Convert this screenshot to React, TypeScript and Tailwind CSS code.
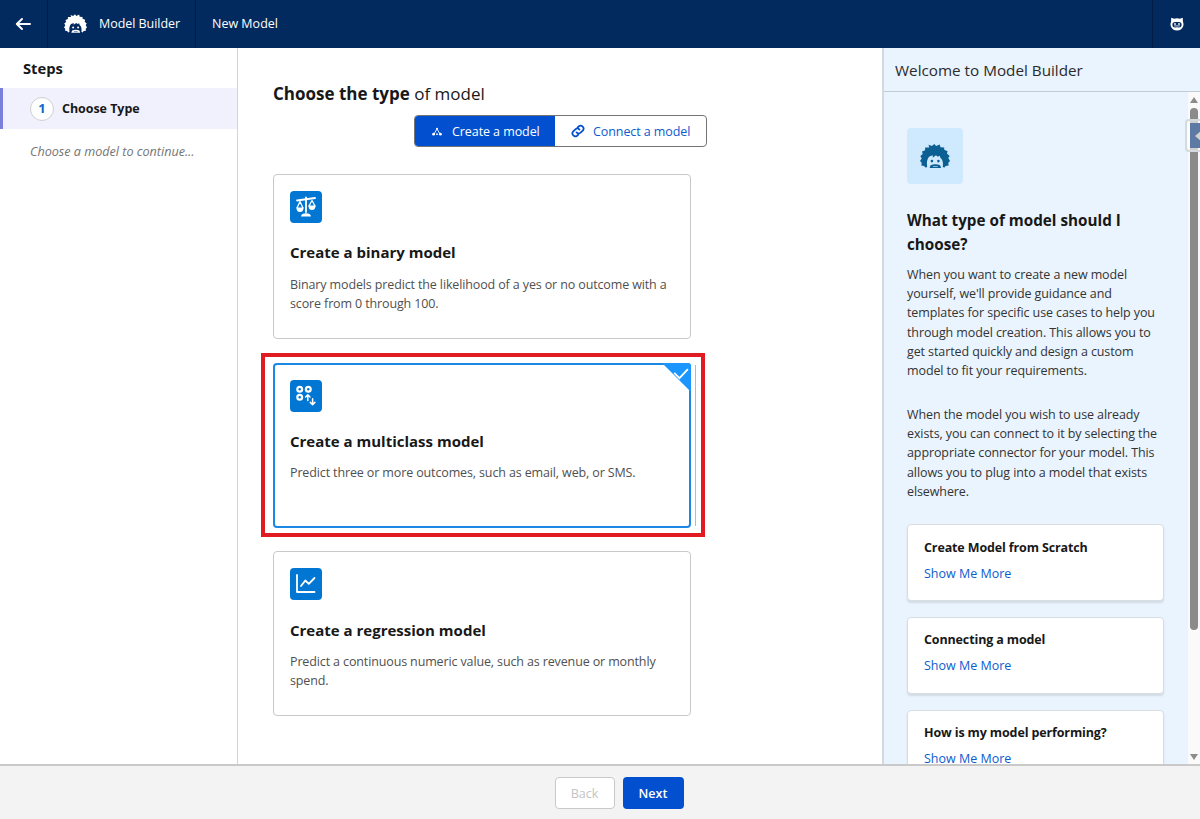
import type { ReactNode } from "react";

type ModelType = {
  title: string;
  lines: string[];
  icon: ReactNode;
  selected?: boolean;
};

function EinsteinIcon({
  className,
  hair,
  face,
}: {
  className: string;
  hair: string;
  face: string;
}) {
  return (
    <svg viewBox="0 0 88 70" className={className}>
      <path
        fill={hair}
        d="M27 10 L25 2 L35 6 L42 0 L47 6 L58 1 L60 9 L71 10 L71 17 L81 21 L79 28 L87 35 L83 41 L88 50 L83 55 L84 63 L75 64 L72 69 L66 67 H22 L16 69 L12 64 L4 63 L5 55 L0 50 L5 42 L1 35 L8 29 L6 22 L15 18 L15 10 Z"
      />
      <path
        fill={face}
        d="M22 71 C19 60 20 48 24 41 C27 36 33 33 38 34 L37 40 L47 33 L52 37 L58 34 L60 41 C67 46 69 58 66 71 Z"
      />
      <circle cx="35" cy="50" r="3.8" fill={hair} />
      <circle cx="54" cy="50" r="3.8" fill={hair} />
      <path fill={hair} d="M28 70 L31 62 Q45 56 59 62 L62 70 Z" />
      <path d="M38 66 H52" stroke={face} strokeWidth="2" />
    </svg>
  );
}

function AstroIcon() {
  return (
    <svg viewBox="0 0 14 14" className="size-3.5">
      <path
        fill="#fff"
        d="M1.2 .8 L4.2 1.8 Q7 .6 9.8 1.8 L12.8 .8 L12.9 4.4 Q14 6.8 13.2 9.2 Q11.6 13.4 7 13.4 Q2.4 13.4 0.8 9.2 Q0 6.8 1.1 4.4 Z"
      />
      <rect x="2.4" y="5" width="9.2" height="5.4" rx="2.7" fill="#022a5e" />
      <path d="M4 8.6 H10 Q9.2 10.6 7 10.6 T4 8.6" fill="#fff" />
      <circle cx="5" cy="7" r=".9" fill="#fff" />
      <circle cx="9" cy="7" r=".9" fill="#fff" />
      <path d="M5 9.4 H9" stroke="#022a5e" strokeWidth=".7" />
    </svg>
  );
}

const scaleIcon = (
  <svg viewBox="0 0 32 32" className="size-8" fill="none" stroke="#fff" strokeLinecap="round">
    <path d="M7 9.5 L25 7" strokeWidth="1.8" />
    <path d="M16 6.5 V21" strokeWidth="1.8" />
    <path d="M10 10.5 L7 17 M10 10.5 L13 17 M22 9.5 L19 15 M22 9.5 L25 15" strokeWidth="1.3" />
    <path d="M6.5 16.5 H13.5 Q13.5 21 10 21 T6.5 16.5 Z M18.5 14.5 H25.5 Q25.5 19 22 19 T18.5 14.5 Z" fill="#fff" stroke="none" />
    <path d="M11 25.5 Q11.5 22.3 16 22.3 T21 25.5 Z" fill="#fff" stroke="none" />
  </svg>
);

const multiclassIcon = (
  <svg viewBox="0 0 32 32" className="size-8" fill="none" stroke="#fff">
    <g strokeWidth="2.2">
      <circle cx="9.7" cy="9.3" r="2.4" />
      <circle cx="18.3" cy="9.3" r="2.4" />
      <circle cx="9.7" cy="17.3" r="2.4" />
    </g>
    <g strokeWidth="1.5" strokeLinecap="round" strokeLinejoin="round">
      <path d="M17.8 20.5 V15 M15.6 17 L17.8 14.8 L20 17" />
      <path d="M22.6 18.8 V24.6 M20.3 22.4 L22.6 24.7 L24.9 22.4" />
    </g>
  </svg>
);

const chartIcon = (
  <svg viewBox="0 0 32 32" className="size-8" fill="none" stroke="#fff" strokeWidth="1.8" strokeLinecap="round" strokeLinejoin="round">
    <path d="M7 7 V24 H24.5" />
    <path d="M11 18 L15.3 12.5 L18.8 15.8 L24.5 10" />
  </svg>
);

const MODEL_TYPES: ModelType[] = [
  {
    title: "Create a binary model",
    lines: [
      "Binary models predict the likelihood of a yes or no outcome with a",
      "score from 0 through 100.",
    ],
    icon: scaleIcon,
  },
  {
    title: "Create a multiclass model",
    lines: ["Predict three or more outcomes, such as email, web, or SMS."],
    icon: multiclassIcon,
    selected: true,
  },
  {
    title: "Create a regression model",
    lines: [
      "Predict a continuous numeric value, such as revenue or monthly",
      "spend.",
    ],
    icon: chartIcon,
  },
];

const HELP_PARAGRAPHS = [
  [
    "When you want to create a new model",
    "yourself, we'll provide guidance and",
    "templates for specific use cases to help you",
    "through model creation. This allows you to",
    "get started quickly and design a custom",
    "model to fit your requirements.",
  ],
  [
    "When the model you wish to use already",
    "exists, you can connect to it by selecting the",
    "appropriate connector for your model. This",
    "allows you to plug into a model that exists",
    "elsewhere.",
  ],
];

const HELP_TOPICS = [
  "Create Model from Scratch",
  "Connecting a model",
  "How is my model performing?",
];

function TopBar() {
  return (
    <header className="flex h-12 shrink-0 items-stretch bg-[#022a5e] text-[12.5px] text-white">
      <button type="button" className="flex w-12 items-center justify-center border-r border-[#021d45]">
        <svg viewBox="0 0 16 14" className="mr-0.5 h-3.5 w-4" fill="none" stroke="#fff" strokeWidth="2" strokeLinecap="round" strokeLinejoin="round">
          <path d="M15 7 H1.8 M7 2 L1.8 7 L7 12" />
        </svg>
      </button>
      <div className="flex w-[148px] items-center border-r border-[#021d45] pl-4">
        <EinsteinIcon className="mb-0.5 h-[19px] w-[23px]" hair="#fff" face="#022a5e" />
        <span className="ml-3 tracking-[-0.05px]">Model Builder</span>
      </div>
      <div className="flex flex-1 items-center pl-4">New Model</div>
      <div className="flex w-12 items-center justify-center border-l border-[#021d45]">
        <AstroIcon />
      </div>
    </header>
  );
}

function StepsPanel() {
  return (
    <aside className="w-[238px] shrink-0 border-r border-[#d4d4d4] bg-white">
      <h2 className="flex h-10 items-center pl-[23px] text-[14.75px] font-bold">Steps</h2>
      <div className="flex h-[41px] items-center border-l-3 border-[#7a7fdc] bg-[#f1f1fe] pl-7">
        <span className="-ml-px flex size-6 items-center justify-center rounded-full border border-[#cfcfcf] bg-white text-[13px] font-bold text-[#0b6bcb]">
          1
        </span>
        <span className="ml-2 pt-0.5 text-[12.5px] font-bold tracking-[-0.05px]">Choose Type</span>
      </div>
      <p className="mt-3 pl-[30px] text-[12.6px] leading-[22px] text-[#747474] italic">
        Choose a model to continue...
      </p>
    </aside>
  );
}

function ModelCard({ model }: { model: ModelType }) {
  return (
    <div
      className={`relative h-[165px] w-[418px] rounded-[4px] bg-white ${
        model.selected ? "border-2 border-[#1b88e6] p-[15px]" : "border border-[#c9c9c9] p-4"
      }`}
    >
      <div className="size-8 rounded-[4px] bg-[#0176d3]">{model.icon}</div>
      <h3 className="mt-[17.4px] text-[15px] leading-6 font-bold whitespace-nowrap">{model.title}</h3>
      <p className="mt-[10.4px] text-[12.5px] leading-[19.5px] tracking-[-0.13px] whitespace-nowrap text-[#505050]">
        {model.lines.map((line) => (
          <span key={line} className="block">{line}</span>
        ))}
      </p>
      {model.selected && (
        <>
          <svg viewBox="0 0 28 28" className="absolute -top-0.5 -right-0.5 size-[29px]">
            <path d="M0 0 H25 Q28 0 28 3 V28 Z" fill="#1b96ff" />
            <path d="M11.8 9.6 L16.8 14.6 L25 6" fill="none" stroke="#fff" strokeWidth="1.7" />
          </svg>
          <div className="absolute top-0 -right-[7px] h-[161px] w-px bg-[#a9bdd3]" />
          <div className="absolute -top-3 -right-4 -bottom-[11px] -left-3.5 border-4 border-[#e11b22]" />
        </>
      )}
    </div>
  );
}

function ChooseType() {
  return (
    <main className="flex-1 bg-white pl-[35px]">
      <h1 className="mt-[34px] text-[17px] leading-6 whitespace-nowrap">
        <b>Choose the type</b> of model
      </h1>
      <div className="mt-[9px] ml-[141px] flex h-8 w-[293px] overflow-hidden rounded-[4px] border border-[#747474] text-[12.5px] tracking-[-0.08px]">
        <button type="button" className="-my-px -ml-px flex w-[141px] items-center bg-[#0250d0] pl-[18px] text-white">
          <svg viewBox="0 0 10 9" className="h-[9px] w-2.5" fill="#fff" stroke="#fff">
            <path d="M5 2 L2 7 M5 2 L8 7" strokeWidth=".9" />
            <circle cx="5" cy="1.8" r="1" stroke="none" />
            <circle cx="1.6" cy="7.2" r="1.4" stroke="none" />
            <circle cx="8.4" cy="7.2" r="1.4" stroke="none" />
            <circle cx="5" cy="7.2" r=".9" stroke="none" />
          </svg>
          <span className="ml-2.5 pt-0.5 whitespace-nowrap">Create a model</span>
        </button>
        <button type="button" className="flex flex-1 items-center pl-4 text-[#0b5cce]">
          <svg viewBox="0 0 24 24" className="size-3.5" fill="none" stroke="#0250d0" strokeWidth="3" strokeLinecap="round">
            <path d="M9.5 14.5 a5 5 0 0 0 7 .4 l4-4 a5 5 0 0 0 -7-7 l-2 2" />
            <path d="M14.5 9.5 a5 5 0 0 0 -7-.4 l-4 4 a5 5 0 0 0 7 7 l2-2" />
          </svg>
          <span className="ml-2 pt-0.5 whitespace-nowrap">Connect a model</span>
        </button>
      </div>
      <div className="mt-[27px] flex flex-col gap-[23.6px]">
        {MODEL_TYPES.map((model) => (
          <ModelCard key={model.title} model={model} />
        ))}
      </div>
    </main>
  );
}

function HelpPanel() {
  return (
    <aside className="relative flex w-[318px] shrink-0 flex-col border-l-2 border-[#d3d9df] bg-[#eaf4fe]">
      <h2 className="flex h-11 shrink-0 items-center border-b border-[#c3cbd2] pt-0.5 pl-[11px] text-[15.25px] text-[#2b2b2b]">
        Welcome to Model Builder
      </h2>
      <div className="flex min-h-0 flex-1">
        <div className="flex-1 overflow-hidden pt-9 pl-[23px]">
          <div className="flex size-14 items-center justify-center rounded-[4px] bg-[#cfe9fe]">
            <EinsteinIcon className="h-6 w-[30px]" hair="#0b5f92" face="#cfe9fe" />
          </div>
          <h3 className="mt-6 text-[15.25px] leading-6 font-bold whitespace-nowrap">
            What type of model should I
            <br />
            choose?
          </h3>
          <div className="mt-[8.6px] flex flex-col gap-6">
            {HELP_PARAGRAPHS.map((lines) => (
              <p key={lines[0]} className="text-[12.5px] leading-[19.35px] tracking-[-0.1px] whitespace-nowrap text-[#333]">
                {lines.map((line) => (
                  <span key={line} className="block">{line}</span>
                ))}
              </p>
            ))}
          </div>
          <div className="mt-[23px] flex w-[257px] flex-col gap-4">
            {HELP_TOPICS.map((topic) => (
              <div key={topic} className="h-[76.6px] shrink-0 rounded-[4px] border border-[#d8dde2] bg-white pt-[12.4px] pl-4 text-[12.5px] shadow-[0_2px_2px_rgba(0,0,0,0.1)]">
                <p className="leading-5 font-bold tracking-[-0.13px]">{topic}</p>
                <a href="#" className="mt-1.5 block leading-5 text-[#0b5cce]">Show Me More</a>
              </div>
            ))}
          </div>
        </div>
        <div className="flex w-3 flex-col items-center bg-[#fafafa] pt-[5px] pb-1">
          <svg viewBox="0 0 8 6" className="h-1.5 w-2">
            <path d="M4 0 L8 6 H0 Z" fill="#8b8b8b" />
          </svg>
          <div className="mt-[5px] h-[522px] w-2 rounded-full bg-[#8b8b8b]" />
          <svg viewBox="0 0 8 6" className="mt-auto h-1.5 w-2">
            <path d="M4 6 L8 0 H0 Z" fill="#8b8b8b" />
          </svg>
        </div>
      </div>
      <div className="absolute top-[71px] right-0 h-[33px] w-[15px] rounded-l-[4px] border-2 border-r-0 border-[#d5dade] bg-white/60 py-0.5 pl-[3px]">
        <div className="flex h-full items-center justify-end bg-[#5d7aa5]">
          <svg viewBox="0 0 6 10" className="h-2.5 w-[5px]">
            <path d="M6 0 L0 5 L6 10 Z" fill="#d3d3d3" />
          </svg>
        </div>
      </div>
    </aside>
  );
}

export default function App() {
  return (
    <div className="flex h-[819px] w-[1200px] flex-col overflow-hidden bg-white font-['Open_Sans','Noto_Sans',sans-serif] text-[#181818]">
      <TopBar />
      <div className="flex min-h-0 flex-1">
        <StepsPanel />
        <ChooseType />
        <HelpPanel />
      </div>
      <footer className="flex h-[55px] shrink-0 justify-center gap-2 border-t-2 border-[#c9c9c9] bg-[#f3f3f3] pt-[11px] pl-[38px] text-[12.5px]">
        <button type="button" disabled className="h-8 w-[60px] rounded-[4px] border border-[#c9c9c9] bg-white pt-0.5 text-[#c4c4c4]">
          Back
        </button>
        <button type="button" className="h-8 w-[61px] rounded-[4px] bg-[#0250d0] pt-0.5 font-semibold text-white">
          Next
        </button>
      </footer>
    </div>
  );
}
